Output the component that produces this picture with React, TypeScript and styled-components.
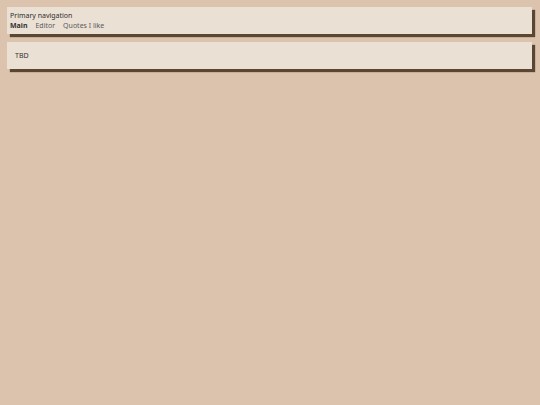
import React from 'react';
import styled, { createGlobalStyle } from 'styled-components';

const GlobalStyle = createGlobalStyle`
    html, body {
        margin: 0;
        padding: 0;
        background: #dcc3ae;
        min-height: 100%;
    }
    body {
        font-family: "Noto Sans", "Open Sans", sans-serif;
        color: #333;
    }
`

const Page = styled.div`
    display: flex;
    flex-direction: column;
    gap: 8px;
    padding: 7px 8px 20px 7px;
`

const Panel = styled.div`
    background: #ebe0d4;
    box-shadow: 3px 3px 1px #5b4632;
`

const NavPanel = styled(Panel)`
    padding: 3px;
    height: 21px;
    display: flex;
    flex-direction: column;
    justify-content: center;
`

const NavTitle = styled.h2`
    margin: 0;
    font-size: 7px;
    font-weight: 400;
    line-height: 10px;
    color: #2e2e2e;
`

const NavList = styled.ul`
    display: flex;
    gap: 8px;
    margin: 0;
    padding: 0;
    list-style: none;
`

interface INavItem {
    active?: boolean;
}

const NavItem = styled.li<INavItem>`
    font-size: 7px;
    line-height: 10px;
    font-weight: ${({active}) => active ? 700 : 400};
    color: ${({active}) => active ? '#333' : '#5a5a5a'};
`

const ContentPanel = styled(Panel)`
    height: 27px;
    padding: 0 8px;
    display: flex;
    align-items: center;
    font-size: 7px;
    color: #333;
`

const App = () => {
    return (
        <>
            <GlobalStyle />
            <Page>
                <NavPanel>
                    <NavTitle>Primary navigation</NavTitle>
                    <NavList>
                        <NavItem active>Main</NavItem>
                        <NavItem>Editor</NavItem>
                        <NavItem>Quotes I like</NavItem>
                    </NavList>
                </NavPanel>
                <ContentPanel>TBD</ContentPanel>
            </Page>
        </>
    );
};

export default App;
